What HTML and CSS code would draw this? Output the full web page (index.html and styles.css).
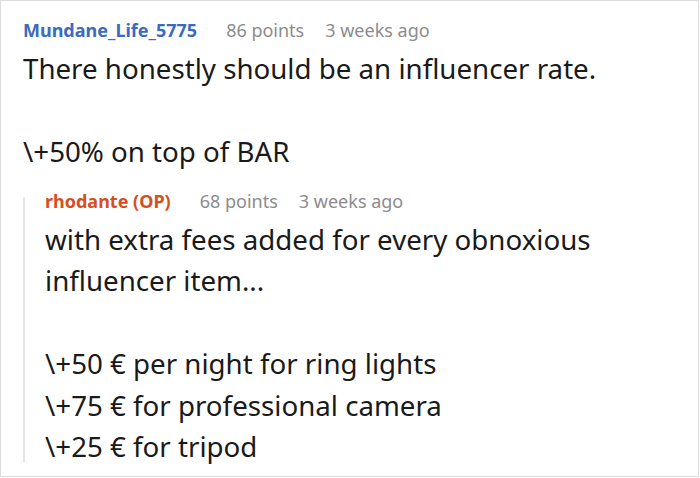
FILE: index.html
```html
<!DOCTYPE html>
<html>
<head>
<meta charset="utf-8">
<link rel="stylesheet" href="styles.css">
</head>
<body>
<div class="frame">
  <div class="comment">
    <div class="meta">
      <span class="user user-blue">Mundane_Life_5775</span>
      <span class="info">86 points</span>
      <span class="info">3 weeks ago</span>
    </div>
    <div class="body">
      <p>There honestly should be an influencer rate.</p>
      <p>\+50% on top of BAR</p>
    </div>
    <div class="reply">
      <div class="thread-line"></div>
      <div class="reply-content">
        <div class="meta">
          <span class="user user-op">rhodante (OP)</span>
          <span class="info">68 points</span>
          <span class="info">3 weeks ago</span>
        </div>
        <div class="body">
          <p>with extra fees added for every obnoxious influencer item...</p>
          <p>\+50 € per night for ring lights<br>\+75 € for professional camera<br>\+25 € for tripod</p>
        </div>
      </div>
    </div>
  </div>
</div>
</body>
</html>
```
FILE: styles.css
```css
html, body {
  margin: 0;
  padding: 0;
  background: #fff;
}
.frame {
  width: 697px;
  height: 475px;
  border: 1px solid #dcdcdc;
  overflow: hidden;
  font-family: "Noto Sans", sans-serif;
}
.comment {
  padding: 15px 0 0 22px;
}
.meta {
  display: flex;
  font-size: 18px;
  line-height: 28px;
  margin-bottom: 4px;
}
.user {
  font-weight: bold;
  margin-right: 29px;
}
.info {
  color: #8c8c8c;
  margin-right: 21px;
}
.user-blue { color: #3a6bc0; }
.user-op { color: #d4501f; }
.body {
  font-size: 27.7px;
  line-height: 41.5px;
  color: #1a1a1a;
}
.body p {
  margin: 0 0 41.5px 0;
}
.body p:last-child {
  margin-bottom: 0;
}
.reply {
  display: flex;
  margin-top: 14px;
}
.thread-line {
  width: 2px;
  background: #e6e6e6;
  margin: 10px 20px 6px 0;
  flex: none;
}
.reply-content {
  flex: 1;
}
```
